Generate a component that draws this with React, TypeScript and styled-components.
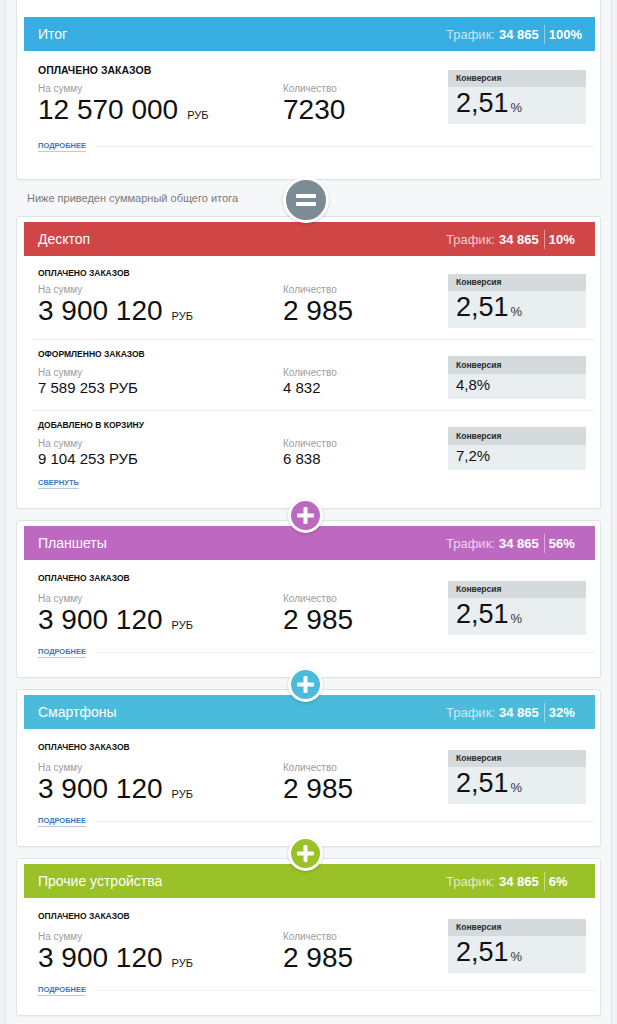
import React from "react";
import styled, { createGlobalStyle } from "styled-components";

const GlobalStyle = createGlobalStyle`
  html, body {
    margin: 0;
    padding: 0;
    background: #eff1f2;
  }
  body {
    font-family: "Liberation Sans", Arial, sans-serif;
    color: #151515;
  }
`;

type RowKind = "total" | "loose" | "compact" | "small";

interface Kind {
  pad: number;
  title: number;
  titleLine: number;
  gap: number;
  boxTop: number;
  big: boolean;
}

const kinds: Record<RowKind, Kind> = {
  total: { pad: 13, title: 10.5, titleLine: 12, gap: 7, boxTop: 6, big: true },
  loose: { pad: 13, title: 8.5, titleLine: 11, gap: 9, boxTop: 8, big: true },
  compact: { pad: 12, title: 8.5, titleLine: 11, gap: 3, boxTop: 6, big: true },
  small: { pad: 9, title: 8.5, titleLine: 11, gap: 4, boxTop: 7, big: false },
};

const Page = styled.div`
  margin: 0 5px;
  min-height: 1024px;
  padding: 0 10px 20px;
  background: #f6f7f8;
  border-left: 1px solid #e3e6e8;
  border-right: 1px solid #e3e6e8;
`;

const Card = styled.section<{ $cut?: boolean }>`
  background: #fff;
  border: 1px solid #e1e4e7;
  border-radius: 3px;
  box-shadow: 0 1px 1px rgba(0, 0, 0, 0.03);
  padding: 5px 5px 0 7px;
  ${(p) =>
    p.$cut &&
    `
    border-top: none;
    border-top-left-radius: 0;
    border-top-right-radius: 0;
    padding-top: 17px;
  `}
`;

const Header = styled.header<{ $color: string }>`
  height: 34px;
  display: grid;
  grid-template-columns: 1fr 149px;
  align-items: center;
  padding-left: 14px;
  background: ${(p) => p.$color};
  color: #fff;
`;

const HeaderTitle = styled.span`
  font-size: 14px;
`;

const Traffic = styled.div`
  display: flex;
  align-items: center;
  font-size: 13px;
  white-space: nowrap;
  color: rgba(255, 255, 255, 0.72);
`;

const TrafficNum = styled.b<{ $first?: boolean }>`
  color: #fff;
  font-weight: 700;
  margin-left: ${(p) => (p.$first ? 4 : 0)}px;
`;

const TrafficSep = styled.i`
  display: inline-block;
  width: 1px;
  height: 19px;
  margin: 0 4px 0 5px;
  background: rgba(255, 255, 255, 0.45);
`;

const Rows = styled.div`
  margin-left: 8px;
`;

const Row = styled.div<{ $k: Kind }>`
  display: grid;
  grid-template-columns: 245px 165px 138px;
  grid-template-rows: auto auto;
  padding: ${(p) => p.$k.pad}px 9px 0 6px;
  &:not(:last-child) {
    padding-bottom: 11px;
  }
  & + & {
    border-top: 1px solid #eceff1;
  }
`;

const RowTitle = styled.div<{ $k: Kind }>`
  grid-column: 1 / 3;
  grid-row: 1;
  font-size: ${(p) => p.$k.title}px;
  line-height: ${(p) => p.$k.titleLine}px;
  font-weight: 700;
  color: #111;
`;

const Cell = styled.div<{ $k: Kind }>`
  grid-row: 2;
  padding-top: ${(p) => p.$k.gap}px;
`;

const Label = styled.div`
  font-size: 10px;
  line-height: 12px;
  color: #9d9d9d;
`;

const Value = styled.div<{ $big: boolean }>`
  height: ${(p) => (p.$big ? 30 : 18)}px;
  font-size: ${(p) => (p.$big ? 28 : 15)}px;
  line-height: ${(p) => (p.$big ? 30 : 18)}px;
  color: #111;
  white-space: nowrap;
`;

const Unit = styled.span`
  font-size: 11px;
  line-height: 1;
  margin-left: 9px;
`;

const ConvBox = styled.div<{ $k: Kind }>`
  grid-column: 3;
  grid-row: 1 / 3;
  align-self: start;
  margin-top: ${(p) => p.$k.boxTop}px;
  background: #e9eef1;
`;

const ConvHead = styled.div<{ $big: boolean }>`
  height: ${(p) => (p.$big ? 17 : 18)}px;
  line-height: ${(p) => (p.$big ? 17 : 18)}px;
  padding-left: 8px;
  background: #d5dadd;
  font-size: 8.5px;
  font-weight: 700;
  color: #2a2a2a;
`;

const ConvBody = styled.div<{ $big: boolean }>`
  height: ${(p) => (p.$big ? 37 : 25)}px;
  line-height: ${(p) => (p.$big ? 33 : 22)}px;
  padding-left: 8px;
  font-size: ${(p) => (p.$big ? 27 : 15)}px;
  color: #111;
`;

const Percent = styled.span`
  font-size: 13px;
  line-height: 1;
  margin-left: 2px;
  color: #333;
`;

const Footer = styled.div<{ $mt: number; $pb: number }>`
  display: flex;
  align-items: center;
  gap: 10px;
  height: 11px;
  margin: ${(p) => p.$mt}px 0 0 8px;
  padding: 0 0 ${(p) => p.$pb}px 6px;
`;

const MoreLink = styled.a`
  font-size: 7.5px;
  line-height: 10px;
  font-weight: 700;
  color: #3b78c0;
  text-decoration: none;
  border-bottom: 1px solid #b3cbe6;
  cursor: pointer;
`;

const FooterLine = styled.div`
  flex: 1;
  height: 1px;
  background: #eef0f2;
`;

const Gap = styled.div<{ $h: number }>`
  position: relative;
  height: ${(p) => p.$h}px;
  display: flex;
  align-items: center;
  padding-left: 11px;
  font-size: 11px;
  color: #7a7a7a;
`;

const Joint = styled.div<{ $color: string; $size: number; $dy: number }>`
  position: absolute;
  z-index: 2;
  left: 50%;
  top: 50%;
  width: ${(p) => p.$size}px;
  height: ${(p) => p.$size}px;
  margin: ${(p) => -(p.$size / 2 + 3) + p.$dy}px 0 0 ${(p) => -(p.$size / 2 + 3) - 3}px;
  border: 3px solid #fff;
  border-radius: 50%;
  background: ${(p) => p.$color};
  box-shadow: 0 1px 3px rgba(0, 0, 0, 0.18);
  display: flex;
  align-items: center;
  justify-content: center;
`;

interface RowData {
  title: string;
  sum: string;
  qty: string;
  conv: string;
  kind: RowKind;
}

interface Section {
  title: string;
  color: string;
  share: string;
  rows: RowData[];
  link: string;
  line: boolean;
}

const paid = (sum: string, qty: string, kind: RowKind = "loose"): RowData => ({
  title: "ОПЛАЧЕНО ЗАКАЗОВ",
  sum,
  qty,
  conv: "2,51",
  kind,
});

const total: Section = {
  title: "Итог",
  color: "#37ade1",
  share: "100%",
  rows: [paid("12 570 000", "7230", "total")],
  link: "ПОДРОБНЕЕ",
  line: true,
};

const sections: Section[] = [
  {
    title: "Десктоп",
    color: "#d04546",
    share: "10%",
    rows: [
      paid("3 900 120", "2 985", "compact"),
      { title: "ОФОРМЛЕННО ЗАКАЗОВ", sum: "7 589 253 РУБ", qty: "4 832", conv: "4,8%", kind: "small" },
      { title: "ДОБАВЛЕНО В КОРЗИНУ", sum: "9 104 253 РУБ", qty: "6 838", conv: "7,2%", kind: "small" },
    ],
    link: "СВЕРНУТЬ",
    line: false,
  },
  { title: "Планшеты", color: "#be69c1", share: "56%", rows: [paid("3 900 120", "2 985")], link: "ПОДРОБНЕЕ", line: true },
  { title: "Смартфоны", color: "#4bbbdc", share: "32%", rows: [paid("3 900 120", "2 985")], link: "ПОДРОБНЕЕ", line: true },
  { title: "Прочие устройства", color: "#9ac127", share: "6%", rows: [paid("3 900 120", "2 985")], link: "ПОДРОБНЕЕ", line: true },
];

const PlusIcon = () => (
  <svg width="17" height="17" viewBox="0 0 17 17">
    <rect x="0" y="6.5" width="17" height="4" rx="1" fill="#fff" />
    <rect x="6.5" y="0" width="4" height="17" rx="1" fill="#fff" />
  </svg>
);

const EqualsIcon = () => (
  <svg width="20" height="12" viewBox="0 0 20 12">
    <rect x="0" y="0" width="20" height="4" rx="1" fill="#fff" />
    <rect x="0" y="8" width="20" height="4" rx="1" fill="#fff" />
  </svg>
);

const StatRow = ({ row }: { row: RowData }) => {
  const k = kinds[row.kind];
  return (
    <Row $k={k}>
      <RowTitle $k={k}>{row.title}</RowTitle>
      <Cell $k={k}>
        <Label>На сумму</Label>
        <Value $big={k.big}>
          {row.sum}
          {k.big && <Unit>РУБ</Unit>}
        </Value>
      </Cell>
      <Cell $k={k}>
        <Label>Количество</Label>
        <Value $big={k.big}>{row.qty}</Value>
      </Cell>
      <ConvBox $k={k}>
        <ConvHead $big={k.big}>Конверсия</ConvHead>
        <ConvBody $big={k.big}>
          {row.conv}
          {k.big && <Percent>%</Percent>}
        </ConvBody>
      </ConvBox>
    </Row>
  );
};

const SectionCard = ({ s, cut }: { s: Section; cut?: boolean }) => {
  // the total card has more air under its link than the device cards
  const mt = cut ? 16 : s.line ? 12 : 8;
  const pb = cut ? 27 : 19;
  return (
    <Card $cut={cut}>
      <Header $color={s.color}>
        <HeaderTitle>{s.title}</HeaderTitle>
        <Traffic>
          Трафик:<TrafficNum $first>34 865</TrafficNum>
          <TrafficSep />
          <TrafficNum>{s.share}</TrafficNum>
        </Traffic>
      </Header>
      <Rows>
        {s.rows.map((r) => (
          <StatRow key={r.title} row={r} />
        ))}
      </Rows>
      <Footer $mt={mt} $pb={pb}>
        <MoreLink>{s.link}</MoreLink>
        {s.line && <FooterLine />}
      </Footer>
    </Card>
  );
};

export default function App() {
  return (
    <>
      <GlobalStyle />
      <Page>
        <SectionCard s={total} cut />
        <Gap $h={36}>
          Ниже приведен суммарный общего итога
          <Joint $color="#7b8c94" $size={40} $dy={2}>
            <EqualsIcon />
          </Joint>
        </Gap>
        {sections.map((s, i) => (
          <React.Fragment key={s.title}>
            {i > 0 && (
              <Gap $h={11}>
                <Joint $color={s.color} $size={29} $dy={1}>
                  <PlusIcon />
                </Joint>
              </Gap>
            )}
            <SectionCard s={s} />
          </React.Fragment>
        ))}
      </Page>
    </>
  );
}
